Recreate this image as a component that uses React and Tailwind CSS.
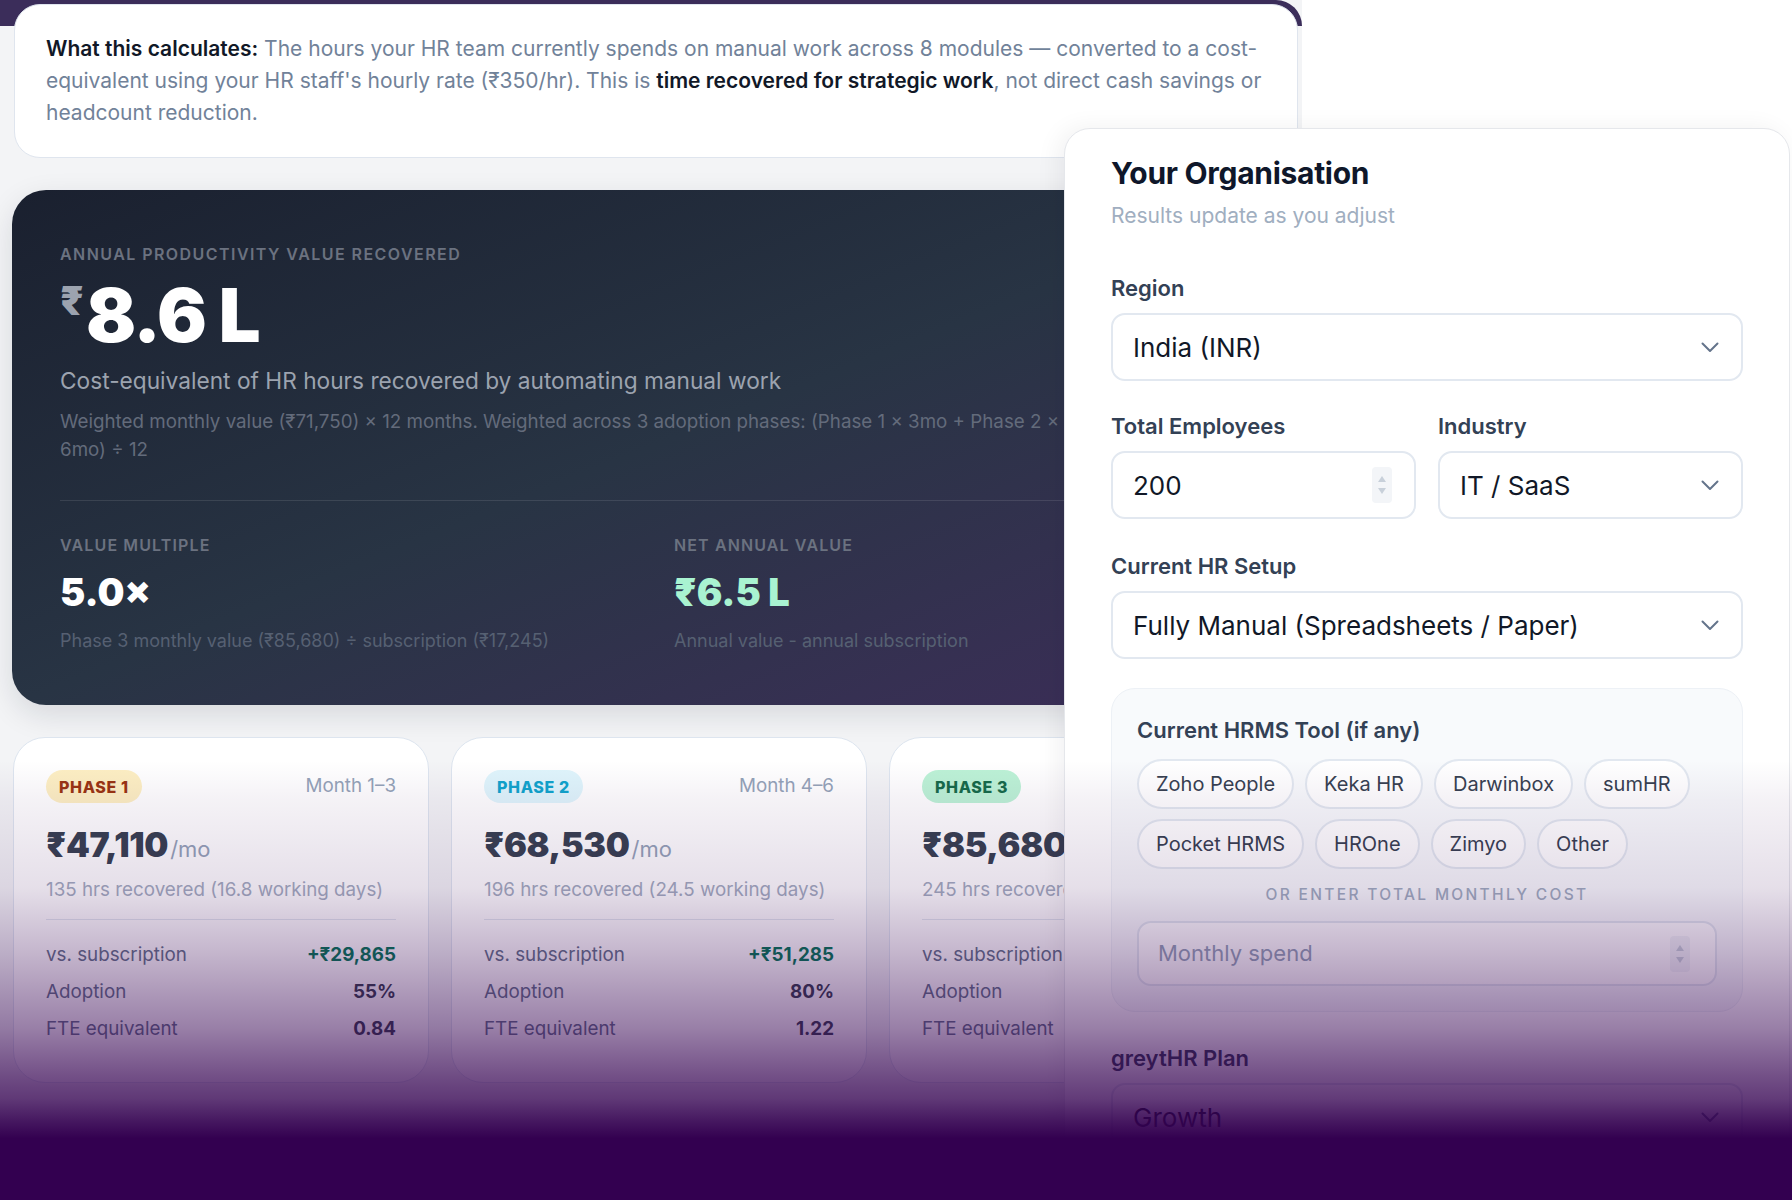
import React from "react";

const PHASES = [
  {
    label: "PHASE 1",
    months: "Month 1–3",
    value: "₹47,110",
    hours: "135 hrs recovered (16.8 working days)",
    vs: "+₹29,865",
    adoption: "55%",
    fte: "0.84",
    badge: "bg-[#fdefc3] text-[#9a3412]",
  },
  {
    label: "PHASE 2",
    months: "Month 4–6",
    value: "₹68,530",
    hours: "196 hrs recovered (24.5 working days)",
    vs: "+₹51,285",
    adoption: "80%",
    fte: "1.22",
    badge: "bg-[#dff5fc] text-[#10a4cc]",
  },
  {
    label: "PHASE 3",
    months: "Month 7–12",
    value: "₹85,680",
    hours: "245 hrs recovered (30.6 working days)",
    vs: "+₹68,435",
    adoption: "100%",
    fte: "1.53",
    badge: "bg-[#bcf2d6] text-[#166b4a]",
  },
];

const TOOLS = [
  ["Zoho People", "Keka HR", "Darwinbox", "sumHR"],
  ["Pocket HRMS", "HROne", "Zimyo", "Other"],
];

function Chevron() {
  return (
    <svg width="18" height="11" viewBox="0 0 18 11" fill="none" className="shrink-0">
      <path d="M1.5 1.5L9 9l7.5-7.5" stroke="#64748b" strokeWidth="2" strokeLinecap="round" strokeLinejoin="round" />
    </svg>
  );
}

function Spinner() {
  return (
    <div className="flex h-[36px] w-[20px] items-center justify-center rounded-[4px] bg-[#f3f5f8]">
      <svg width="12" height="26" viewBox="0 0 12 26">
        <path d="M2 10L6 4l4 6z" fill="#c8d0da" />
        <path d="M2 16l4 6 4-6z" fill="#c8d0da" />
      </svg>
    </div>
  );
}

function Field({ children, right }) {
  return (
    <div className="flex h-[68px] items-center justify-between rounded-[14px] border-2 border-[#e2e8f0] bg-white pl-[20px] pr-[22px] text-[26px] text-[#111827]">
      <span>{children}</span>
      {right || <Chevron />}
    </div>
  );
}

function Label({ children }) {
  return <div className="mb-[11px] text-[22px] font-semibold leading-[28px] text-[#334155]">{children}</div>;
}

function PhaseCard({ p }) {
  return (
    <div className="rounded-[32px] border-[1.5px] border-[#dde5ef] bg-white px-[32px] pb-[40px] pt-[32px]">
      <div className="flex h-[33px] items-center justify-between">
        <span className={`flex h-[33px] items-center rounded-full px-[13px] text-[16px] font-extrabold tracking-[0.04em] ${p.badge}`}>
          {p.label}
        </span>
        <span className="text-[18.8px] text-[#94a3b8]">{p.months}</span>
      </div>
      <div className="mt-[25px] flex items-baseline">
        <span className="text-[34px] font-black leading-none tracking-[-0.01em] text-[#374151]">{p.value}</span>
        <span className="ml-[2px] text-[22px] text-[#94a3b8]">/mo</span>
      </div>
      <div className="mt-[11px] whitespace-nowrap text-[18.8px] leading-[26px] text-[#a3adc0]">{p.hours}</div>
      <div className="mt-[16px] h-px bg-[#e2e8f0]" />
      <div className="mt-[22px] flex flex-col gap-[11px] text-[18.8px] leading-[26px]">
        <div className="flex justify-between">
          <span className="text-[#64748b]">vs. subscription</span>
          <span className="font-bold text-[#047857]">{p.vs}</span>
        </div>
        <div className="flex justify-between">
          <span className="text-[#64748b]">Adoption</span>
          <span className="font-bold text-[#374151]">{p.adoption}</span>
        </div>
        <div className="flex justify-between">
          <span className="text-[#64748b]">FTE equivalent</span>
          <span className="font-bold text-[#374151]">{p.fte}</span>
        </div>
      </div>
    </div>
  );
}

export default function App() {
  return (
    <div className="relative flex h-[1200px] w-[1792px] overflow-hidden bg-white font-['Inter','Noto_Sans',sans-serif]">
      {/* app frame on the left */}
      <div className="w-[1302px] shrink-0 bg-[#f3f4f6]">
        <div className="h-[26px] rounded-tr-[26px] bg-[#3b2d5a]" />

        {/* explainer */}
        <div className="relative -mt-[22px] ml-[14px] mr-[4px] whitespace-nowrap rounded-[26px] border-[1.5px] border-[#dfe5ee] bg-white px-[31px] py-[28px] text-[21px] leading-[32px] text-[#718299]">
          <b className="font-semibold text-[#111827]">What this calculates:</b> The hours your HR team currently spends on
          manual work across 8 modules — converted to a cost-
          <br />
          equivalent using your HR staff's hourly rate (₹350/hr). This is{" "}
          <b className="font-semibold text-[#111827]">time recovered for strategic work</b>, not direct cash savings or
          <br />
          headcount reduction.
        </div>

        {/* headline result */}
        <div className="ml-[12px] mt-[32px] w-[1276px] rounded-[34px] bg-linear-to-br from-[#1a202f] via-[#283444] to-[#3d2d5a] px-[48px] pb-[51px] pt-[52px] shadow-[0_10px_30px_rgba(15,23,42,0.12)]">
          <div className="text-[16px] font-semibold leading-[24px] tracking-[0.09em] text-[#6b7280]">
            ANNUAL PRODUCTIVITY VALUE RECOVERED
          </div>
          <div className="mt-[12px] flex h-[74px] items-start">
            <span className="mt-[3px] text-[40px] font-black leading-none text-[#9ca3af]">₹</span>
            <span className="ml-[2px] text-[74px] font-black leading-none tracking-[-0.02em] text-white">8.6 L</span>
          </div>
          <div className="mt-[13px] text-[22.7px] leading-[32px] text-[#9ca3af]">
            Cost-equivalent of HR hours recovered by automating manual work
          </div>
          <div className="mt-[11px] whitespace-nowrap text-[18.75px] leading-[28px] text-[#636b7b]">
            Weighted monthly value (₹71,750) × 12 months. Weighted across 3 adoption phases: (Phase 1 × 3mo + Phase 2 ×
            3mo + Phase 3 ×
            <br />
            6mo) ÷ 12
          </div>
          <div className="mt-[36px] h-px bg-white/10" />
          <div className="mt-[32px] grid grid-cols-2 gap-[48px]">
            <div>
              <div className="text-[16px] font-semibold leading-[24px] tracking-[0.07em] text-[#6b7280]">VALUE MULTIPLE</div>
              <div className="mt-[16px] text-[38px] font-black leading-none text-white">5.0×</div>
              <div className="mt-[17px] whitespace-nowrap text-[18px] leading-[26px] text-[#566072]">
                Phase 3 monthly value (₹85,680) ÷ subscription (₹17,245)
              </div>
            </div>
            <div>
              <div className="text-[16px] font-semibold leading-[24px] tracking-[0.07em] text-[#6b7280]">NET ANNUAL VALUE</div>
              <div className="mt-[16px] text-[38px] font-black leading-none text-[#a9f3d1]">₹6.5 L</div>
              <div className="mt-[17px] text-[18px] leading-[26px] text-[#566072]">Annual value - annual subscription</div>
            </div>
          </div>
        </div>

        {/* phases */}
        <div className="ml-[13px] mt-[32px] grid grid-cols-[416px_416px_416px] gap-[22px]">
          {PHASES.map((p) => (
            <PhaseCard key={p.label} p={p} />
          ))}
        </div>
      </div>

      {/* settings panel floating over the right side */}
      <div className="absolute left-[1064px] top-[128px] h-[1120px] w-[726px] rounded-t-[26px] border-[1.5px] border-[#e5e7eb] bg-white px-[46px] pt-[26px] shadow-[-6px_0_24px_rgba(15,23,42,0.06)]">
        <div className="text-[30px] font-bold leading-[36px] tracking-[-0.01em] text-[#0f172a]">Your Organisation</div>
        <div className="mt-[11px] text-[21px] leading-[28px] text-[#a0aec0]">Results update as you adjust</div>

        <div className="mt-[44px]">
          <Label>Region</Label>
          <Field>India (INR)</Field>
        </div>

        <div className="mt-[31px] grid grid-cols-2 gap-[22px]">
          <div>
            <Label>Total Employees</Label>
            <Field right={<Spinner />}>200</Field>
          </div>
          <div>
            <Label>Industry</Label>
            <Field>IT / SaaS</Field>
          </div>
        </div>

        <div className="mt-[33px]">
          <Label>Current HR Setup</Label>
          <Field>Fully Manual (Spreadsheets / Paper)</Field>
        </div>

        <div className="mt-[29px] rounded-[24px] border-[1.5px] border-[#edf1f6] bg-[#f8fafc] px-[25px] pb-[25px] pt-[27px]">
          <div className="text-[22px] font-semibold leading-[28px] text-[#334155]">Current HRMS Tool (if any)</div>
          <div className="mt-[15px] flex flex-col gap-[10px]">
            {TOOLS.map((row, i) => (
              <div key={i} className="flex gap-[11px]">
                {row.map((t) => (
                  <span
                    key={t}
                    className="flex h-[50px] items-center rounded-full border-2 border-[#e2e8f0] bg-white px-[17px] text-[20px] text-[#374151]"
                  >
                    {t}
                  </span>
                ))}
              </div>
            ))}
          </div>
          <div className="mt-[16px] text-center text-[15.5px] font-medium leading-[20px] tracking-[0.15em] text-[#a0aec0]">
            OR ENTER TOTAL MONTHLY COST
          </div>
          <div className="mt-[16px] flex h-[65px] items-center justify-between rounded-[14px] border-2 border-[#e2e8f0] bg-white pl-[19px] pr-[25px] text-[22px] text-[#94a3b8]">
            <span>Monthly spend</span>
            <Spinner />
          </div>
        </div>

        <div className="mt-[32px]">
          <Label>greytHR Plan</Label>
          <Field>Growth</Field>
        </div>
      </div>

      {/* fade to brand purple at the bottom */}
      <div className="pointer-events-none absolute inset-x-0 bottom-0 h-[440px] bg-[linear-gradient(to_bottom,rgba(51,0,80,0)_0%,rgba(51,0,80,0.05)_9%,rgba(51,0,80,0.125)_29%,rgba(51,0,80,0.29)_44%,rgba(51,0,80,0.5)_61%,rgba(51,0,80,0.69)_72%,rgba(51,0,80,0.77)_77%,rgba(51,0,80,0.9)_82%,rgba(51,0,80,1)_86%,rgba(51,0,80,1)_100%)]" />
    </div>
  );
}
